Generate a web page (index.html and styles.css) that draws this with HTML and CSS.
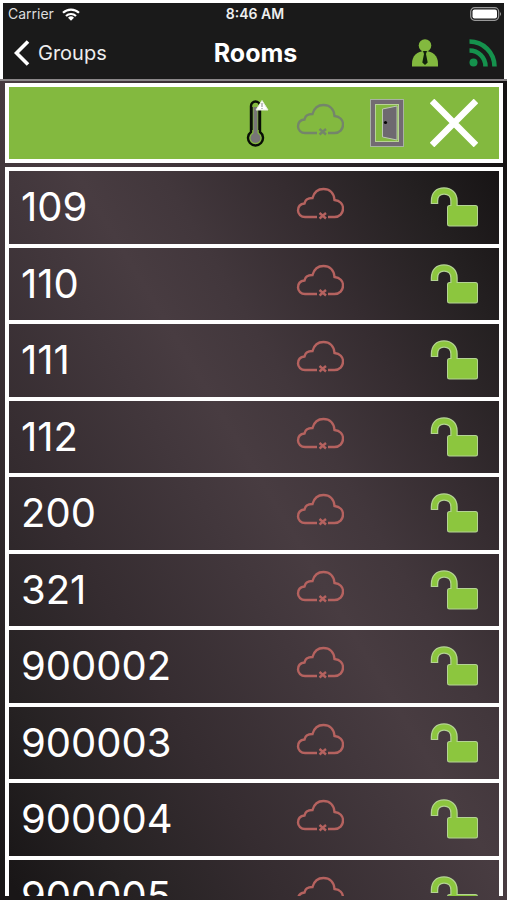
FILE: index.html
```
<!DOCTYPE html>
<html lang="en">
<head>
<meta charset="utf-8">
<meta name="viewport" content="width=device-width, initial-scale=1">
<title>Rooms</title>
<link rel="stylesheet" href="styles.css">
</head>
<body>
<svg class="defs" aria-hidden="true">
  <symbol id="cloud" viewBox="0 0 48 40">
    <g fill="none" stroke="currentColor" stroke-width="2.400">
      <path d="M21 30H9C5 30 2 27 2 23.500c0-4 2.500-6.500 6.500-7 .5-3.500 3.500-5.500 8-5.500C18 5.500 22 2 27.500 2c6 0 10.500 4 11 11 5.500.5 8.500 4 8.500 8.500 0 5-3.500 8.500-8.500 8.500H32"/>
      <path class="cross" d="M23.500 26l6.500 5.500M30 26l-6.500 5.500"/>
    </g>
  </symbol>
  <symbol id="unlock" viewBox="0 0 48 40">
    <path d="M4.500 17v-3C4.500 7.500 8 4 14 4s10 4 10 10v7" fill="none" stroke="#b4d394" stroke-width="7.500"/>
    <rect x="17" y="18" width="31" height="21.500" rx="2.500" fill="#b4d394"/>
    <path d="M4.500 16v-2C4.500 7.500 8 4 14 4s10 4 10 10v8" fill="none" stroke="#8cc63e" stroke-width="5"/>
    <rect x="18" y="19" width="29" height="19.500" rx="1.500" fill="#8cc63e"/>
  </symbol>
</svg>
<div class="screen">
  <header class="top">
    <div class="status">
      <span class="carrier">Carrier
        <svg class="wifi" viewBox="0 0 18 13" aria-hidden="true"><g fill="none" stroke="#fff" stroke-width="2.200"><path d="M1 4.800a11.500 11.500 0 0 1 16 0M4 8a7.200 7.200 0 0 1 10 0"/></g><path d="M6 9.800a4.300 4.300 0 0 1 6 0l-3 3z" fill="#fff"/></svg>
      </span>
      <span class="time">8:46 AM</span>
      <svg class="battery" viewBox="0 0 32 14" aria-hidden="true"><rect x=".7" y=".7" width="28" height="12.600" rx="4" fill="none" stroke="#999" stroke-width="1.200"/><rect x="2.500" y="2.500" width="24.500" height="9" rx="2" fill="#fff"/><path d="M30 5q2 2 0 4z" fill="#999"/></svg>
    </div>
    <nav class="nav">
      <a class="back" href="#groups">
        <svg class="chevron" viewBox="0 0 16 26" aria-hidden="true"><path d="M14 1.500L2.500 13 14 24.500" fill="none" stroke="#fff" stroke-width="3.600"/></svg>
        Groups
      </a>
      <h1>Rooms</h1>
      <div class="actions">
        <button type="button" aria-label="User">
          <svg class="user" viewBox="0 0 28 28" aria-hidden="true"><circle cx="14" cy="6.500" r="6.300" fill="#83b93f"/><path d="M1 27.500v-3C1 17 6 12 14 12s13 5 13 12.500v3z" fill="#83b93f"/><path d="M12 12h4l-1 3 1.700 8.500L14 26l-2.700-2.500L13 15z" fill="#12210c"/></svg>
        </button>
        <button type="button" aria-label="Connection">
          <svg class="signal" viewBox="0 0 28 28" aria-hidden="true"><circle cx="4.500" cy="23.500" r="4" fill="#15924d"/><g fill="none" stroke="#15924d" stroke-width="4.600"><path d="M.5 11.500a16 16 0 0 1 16 16M.5 2.500a25 25 0 0 1 25 25"/></g></svg>
        </button>
      </div>
    </nav>
  </header>
  <main>
    <section class="filters" aria-label="Filters">
      <button type="button" aria-label="Temperature alerts">
        <svg class="thermo" viewBox="0 0 24 48" aria-hidden="true"><path d="M5 33V7a4.500 4.500 0 0 1 9 0v26a7.500 7.500 0 1 1-9 0z" fill="#83b93f" stroke="#090e06" stroke-width="2.400"/><path d="M5.500 31V8M13.500 31V8" stroke="#090e06" stroke-width="2.400"/><path d="M9.500 8v30" stroke="#777577" stroke-width="4"/><circle cx="9.500" cy="39" r="5" fill="#777577"/><path d="M16 1.500l6 9.500H10z" fill="#fff" stroke="#e6eedd" stroke-linejoin="round"/><path d="M16 4v4M16 9v1" stroke="#999" stroke-width="1.200"/></svg>
      </button>
      <button type="button" aria-label="Offline rooms"><svg class="cloud muted" aria-hidden="true"><use href="#cloud"/></svg></button>
      <button type="button" aria-label="Open doors">
        <svg class="door" viewBox="0 0 34 48" aria-hidden="true"><rect width="34" height="48" fill="#a9b3a3"/><rect x="1" y="1" width="32" height="46" fill="#726a72"/><rect x="5" y="5" width="24" height="38" fill="#b8d394"/><rect x="6" y="6" width="22" height="36" fill="#83b93f"/><path d="M12.500 10L27 7v34l-14.500-3z" fill="#6e6970" stroke="#bcc8b2"/><circle cx="15.500" cy="23.500" r="1.600" fill="#050505"/></svg>
      </button>
      <button type="button" aria-label="Close filters"><svg class="close" viewBox="0 0 48 48" aria-hidden="true"><path d="M2 2l44 44M46 2L2 46" stroke="#fff" stroke-width="6.500"/></svg></button>
    </section>
    <ul class="rooms">
      <li><span>109</span><svg class="cloud" aria-hidden="true"><use href="#cloud"/></svg><button type="button" aria-label="Unlock 109"><svg class="lock" aria-hidden="true"><use href="#unlock"/></svg></button></li>
      <li><span>110</span><svg class="cloud" aria-hidden="true"><use href="#cloud"/></svg><button type="button" aria-label="Unlock 110"><svg class="lock" aria-hidden="true"><use href="#unlock"/></svg></button></li>
      <li><span>111</span><svg class="cloud" aria-hidden="true"><use href="#cloud"/></svg><button type="button" aria-label="Unlock 111"><svg class="lock" aria-hidden="true"><use href="#unlock"/></svg></button></li>
      <li><span>112</span><svg class="cloud" aria-hidden="true"><use href="#cloud"/></svg><button type="button" aria-label="Unlock 112"><svg class="lock" aria-hidden="true"><use href="#unlock"/></svg></button></li>
      <li><span>200</span><svg class="cloud" aria-hidden="true"><use href="#cloud"/></svg><button type="button" aria-label="Unlock 200"><svg class="lock" aria-hidden="true"><use href="#unlock"/></svg></button></li>
      <li><span>321</span><svg class="cloud" aria-hidden="true"><use href="#cloud"/></svg><button type="button" aria-label="Unlock 321"><svg class="lock" aria-hidden="true"><use href="#unlock"/></svg></button></li>
      <li><span>900002</span><svg class="cloud" aria-hidden="true"><use href="#cloud"/></svg><button type="button" aria-label="Unlock 900002"><svg class="lock" aria-hidden="true"><use href="#unlock"/></svg></button></li>
      <li><span>900003</span><svg class="cloud" aria-hidden="true"><use href="#cloud"/></svg><button type="button" aria-label="Unlock 900003"><svg class="lock" aria-hidden="true"><use href="#unlock"/></svg></button></li>
      <li><span>900004</span><svg class="cloud" aria-hidden="true"><use href="#cloud"/></svg><button type="button" aria-label="Unlock 900004"><svg class="lock" aria-hidden="true"><use href="#unlock"/></svg></button></li>
      <li><span>900005</span><svg class="cloud" aria-hidden="true"><use href="#cloud"/></svg><button type="button" aria-label="Unlock 900005"><svg class="lock" aria-hidden="true"><use href="#unlock"/></svg></button></li>
    </ul>
  </main>
</div>
</body>
</html>
```
FILE: styles.css
```
* { box-sizing: border-box; }
body { margin: 0; font-family: Inter, "Liberation Sans", sans-serif; color: #fff; }
svg { display: block; flex: none; }
button { padding: 0; border: 0; background: none; color: inherit; font: inherit; }
.defs { display: none; }

.screen {
  display: flex;
  flex-direction: column;
  height: 100vh;
  overflow: hidden;
  background: linear-gradient(59deg, #191617 2%, #262223 13%, #352c30 27%, #42373c 42%, #483c41 49%, #42373c 57%, #352c30 68%, #242021 80%, #151213 91%);
}

.top { padding: 3px 3px 0; background: #fff; border-bottom: 2px solid #8b8789; }
.status, .nav {
  display: grid;
  grid-template-columns: 1fr auto 1fr;
  align-items: center;
  background: #1a1a1a;
}
.status { height: 22px; padding: 0 2px 0 5px; font-size: 14px; line-height: 20px; }
.carrier { display: flex; align-items: center; gap: 8px; color: #ddd; }
.wifi { width: 18px; height: 13px; }
.time { font-weight: 600; color: #eee; }
.battery { width: 32px; height: 14px; justify-self: end; }
.nav { height: 54px; padding: 2px 7px 0 11px; }
.back { display: flex; align-items: center; gap: 8px; color: #eee; font-size: 20px; text-decoration: none; }
.chevron { width: 16px; height: 26px; }
h1 { margin: 0; font-size: 25px; line-height: 28px; font-weight: 700; }
.actions { display: flex; justify-content: flex-end; gap: 30px; }
.user, .signal { width: 28px; height: 28px; }

main {
  display: flex;
  flex: 1;
  flex-direction: column;
  min-height: 0;
  gap: 4px;
  padding: 2px 4px 4px 5px;
}
.filters {
  display: flex;
  align-items: center;
  justify-content: flex-end;
  gap: 26px;
  height: 80px;
  flex: none;
  padding-right: 21px;
  border: 4px solid #fff;
  background: #83b93f;
}
.thermo { width: 24px; height: 48px; }
.door { width: 34px; height: 48px; }
.close { width: 48px; height: 48px; }
.cloud { width: 48px; height: 40px; color: #b5625f; }
.cloud .cross { color: #d08a80; }
.muted { color: #74856a; }

.rooms {
  display: grid;
  grid-auto-rows: calc(100% * 19 / 180);
  flex: 1;
  min-height: 0;
  margin: 0;
  padding: 0;
  overflow: hidden;
  list-style: none;
  border: solid #fff;
  border-width: 4px 4px 0;
}
.rooms li {
  display: flex;
  align-items: center;
  padding: 0 21px 0 12px;
  border-bottom: 4px solid #fff;
}
.rooms span { flex: 1; font-size: 40px; line-height: 48px; }
.rooms .cloud { margin-right: 86px; }
.lock { width: 48px; height: 40px; }
```
